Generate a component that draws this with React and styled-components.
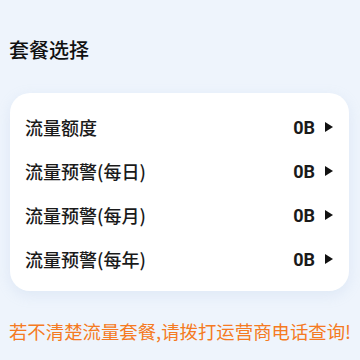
import React from "react";
import styled, { createGlobalStyle } from "styled-components";

const GlobalStyle = createGlobalStyle`
  html, body {
    margin: 0;
    padding: 0;
    background: #eef4fc;
  }
  body {
    font-family: "Noto Sans CJK SC", "Noto Sans", sans-serif;
  }
`;

const rows = [
  { label: "流量额度", value: "0B" },
  { label: "流量预警(每日)", value: "0B" },
  { label: "流量预警(每月)", value: "0B" },
  { label: "流量预警(每年)", value: "0B" },
];

const App = () => {
  return (
    <Page>
      <GlobalStyle />
      <TopTitle>流量设置</TopTitle>
      <SectionTitle>套餐选择</SectionTitle>
      <Card>
        {rows.map((r) => (
          <Row key={r.label}>
            <Label>{r.label}</Label>
            <ValueWrap>
              <Value>{r.value}</Value>
              <Arrow viewBox="0 0 8 10">
                <path d="M0 0 L8 5 L0 10 Z" fill="#111" />
              </Arrow>
            </ValueWrap>
          </Row>
        ))}
      </Card>
      <Notice>若不清楚流量套餐,请拨打运营商电话查询!</Notice>
    </Page>
  );
};

const Page = styled.div`
  width: 360px;
  height: 360px;
  overflow: hidden;
  background: #eef4fc;
  display: flex;
  flex-direction: column;
`;

const TopTitle = styled.div`
  margin-top: -23px;
  height: 24px;
  line-height: 24px;
  text-align: center;
  font-size: 20px;
  color: #999;
`;

const SectionTitle = styled.div`
  margin: 35px 0 0 9px;
  font-size: 20px;
  line-height: 28px;
  font-weight: 500;
  color: #111;
`;

const Card = styled.div`
  margin: 29px 11px 0 10px;
  background: #fff;
  border-radius: 20px;
  box-shadow: 0 4px 14px rgba(150, 175, 215, 0.18);
  padding: 12px 0 10px;
  display: flex;
  flex-direction: column;
`;

const Row = styled.div`
  height: 44px;
  display: flex;
  align-items: center;
  justify-content: space-between;
  padding: 0 16px 0 15px;
`;

const Label = styled.span`
  font-size: 18px;
  font-weight: 500;
  color: #1a1a1a;
`;

const ValueWrap = styled.div`
  display: flex;
  align-items: center;
  gap: 10px;
`;

const Value = styled.span`
  font-family: "Roboto", "Noto Sans", sans-serif;
  font-size: 18px;
  font-weight: 700;
  color: #1a1a1a;
`;

const Arrow = styled.svg`
  width: 8px;
  height: 10px;
`;

const Notice = styled.div`
  margin-top: 27px;
  text-align: center;
  font-size: 18.4px;
  color: #f57a22;
  white-space: nowrap;
`;

export default App;
